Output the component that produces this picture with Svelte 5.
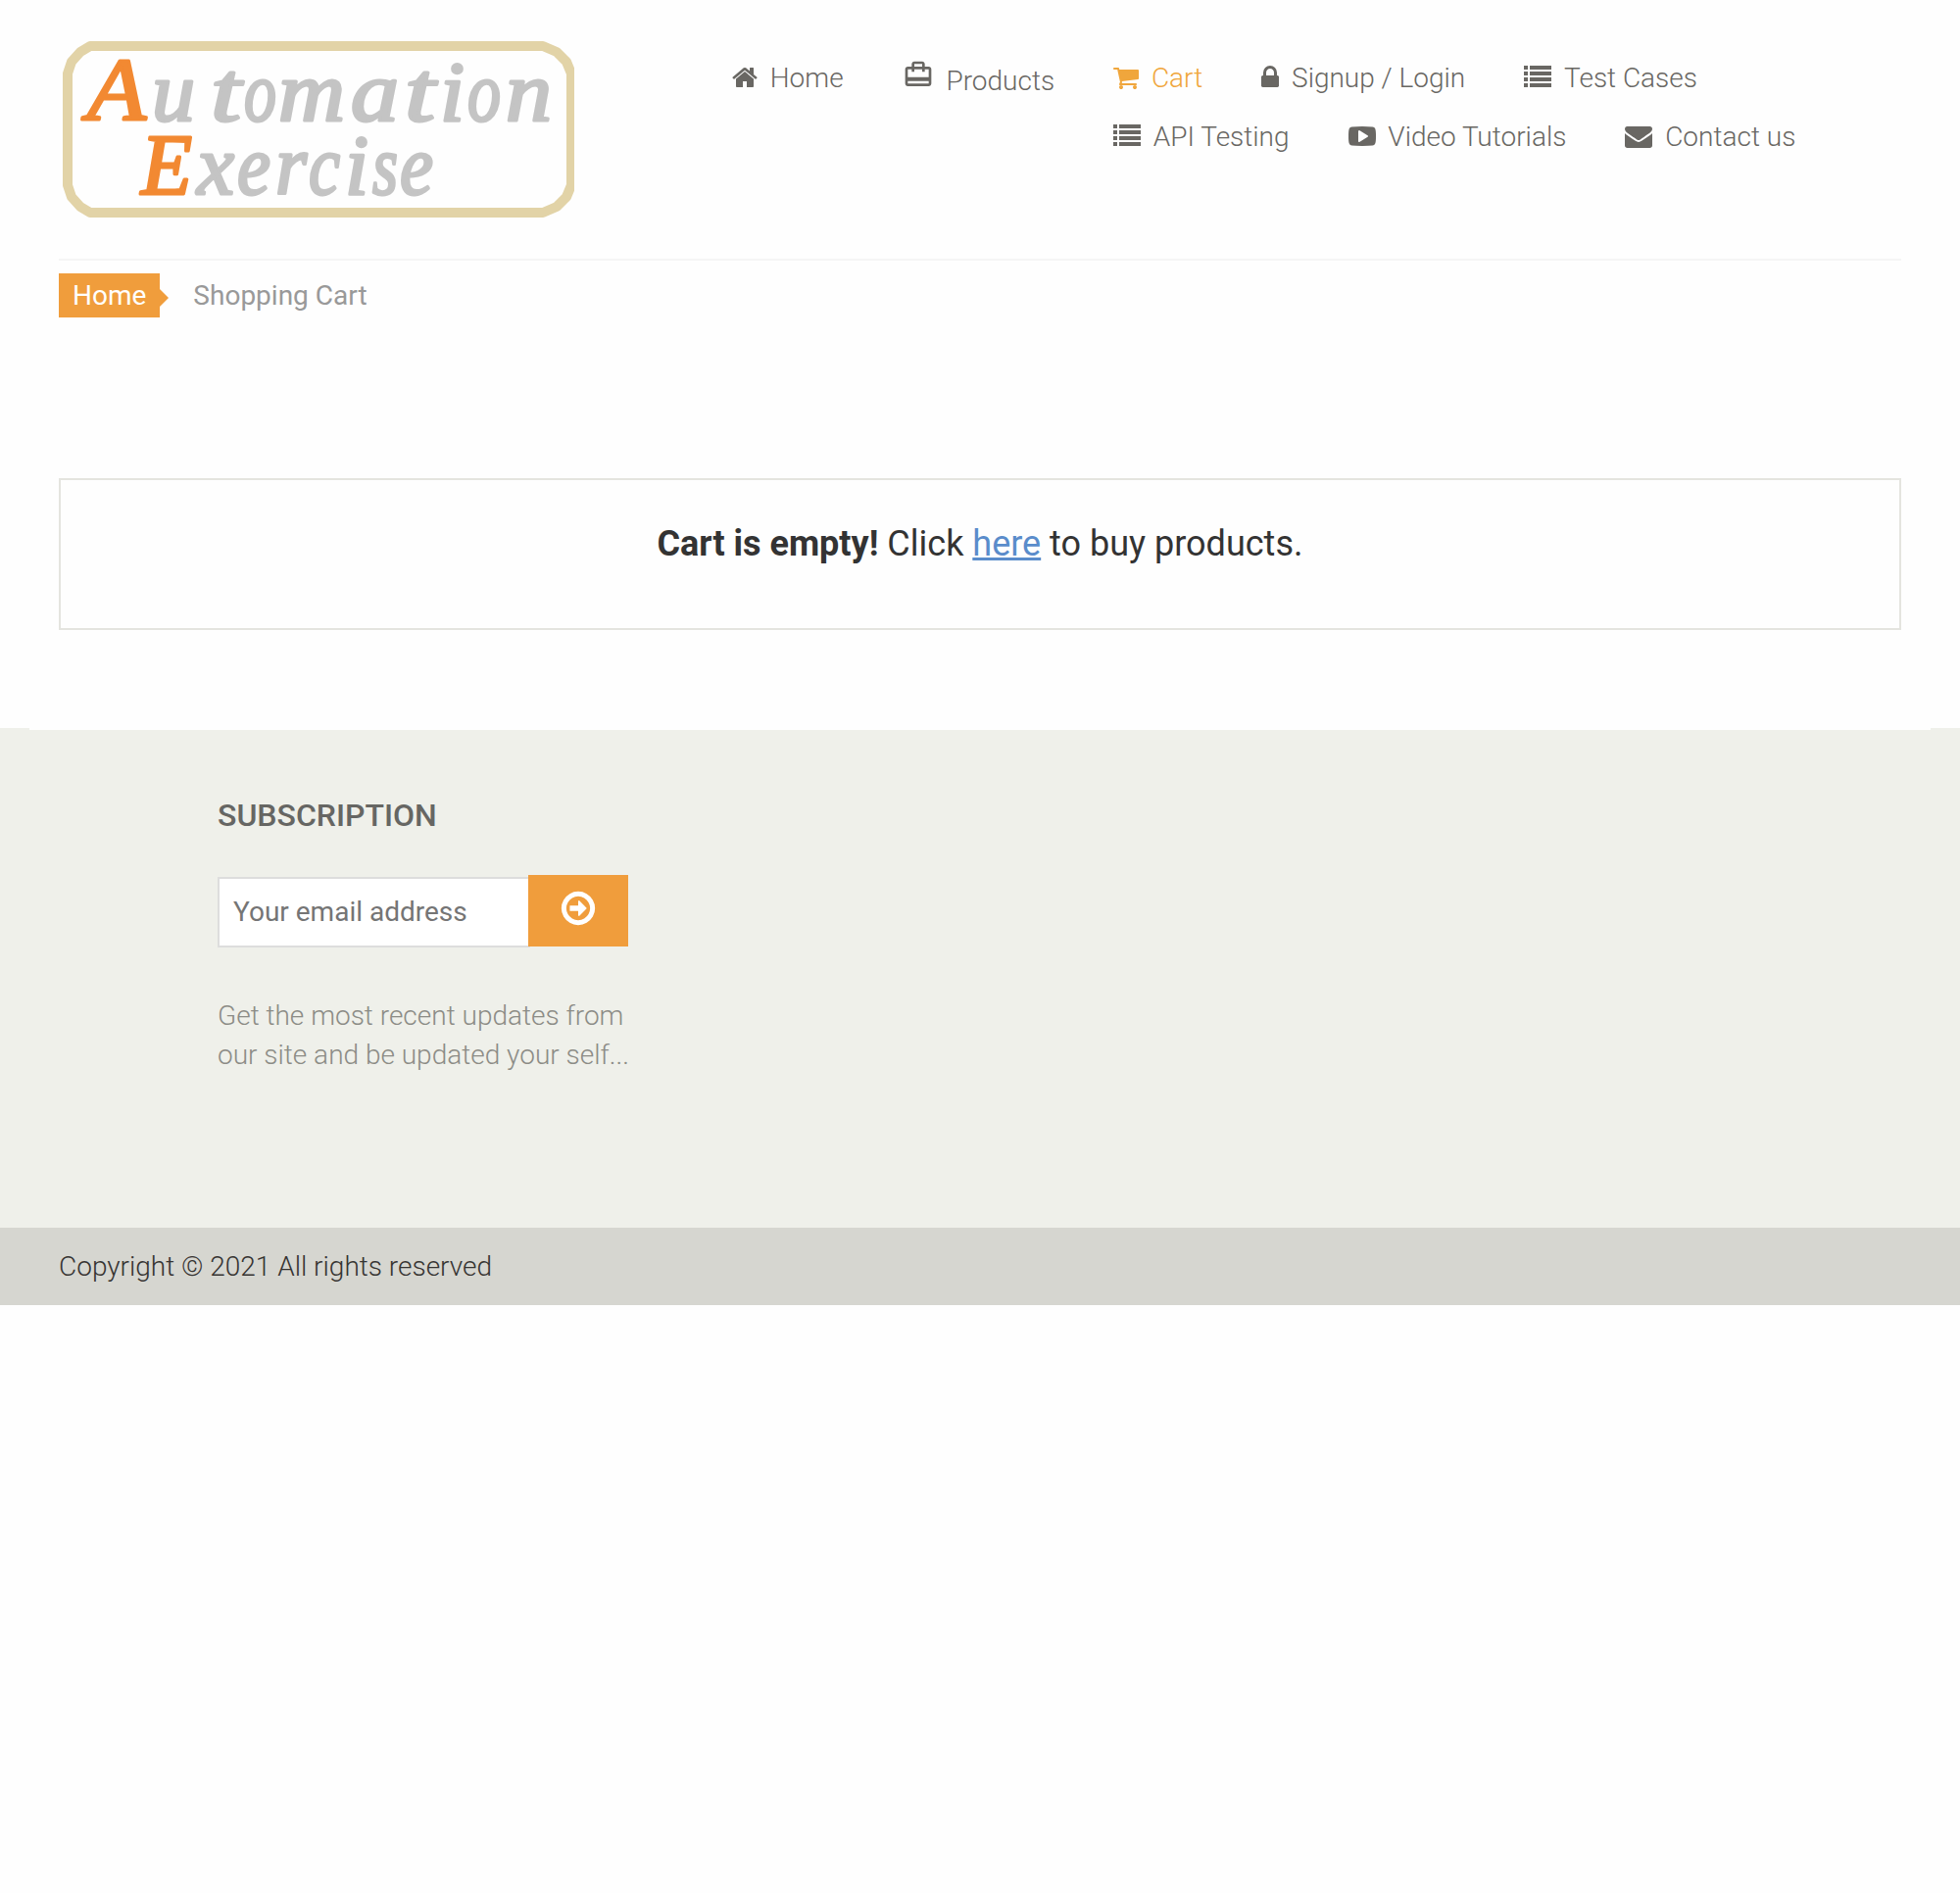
<script>
  const icons = {
    home: { box: '64 0 1664 1792', w: 26, d: 'M1472 992v480q0 26-19 45t-45 19h-384v-384h-256v384h-384q-26 0-45-19t-19-45v-480q0-1 .5-3t.5-3l575-474 575 474q1 2 1 6zm223-69l-62 74q-8 9-21 11h-3q-13 0-21-7l-692-577-692 577q-12 8-24 7-13-2-21-11l-62-74q-8-10-7-23.5t11-21.5l719-599q32-26 76-26t76 26l244 204v-195q0-14 9-23t23-9h192q14 0 23 9t9 23v408l219 182q10 8 11 21.5t-7 23.5z' },
    bag: { box: '0 0 24 24', w: 32, d: 'M20 6h-3V4c0-1.11-.89-2-2-2H9c-1.11 0-2 .89-2 2v2H4c-1.11 0-2 .89-2 2v11c0 1.11.89 2 2 2h16c1.11 0 2-.89 2-2V8c0-1.11-.89-2-2-2zM9 4h6v2H9V4zm11 15H4v-2h16v2zm0-5H4V8h3v2h2V8h6v2h2V8h3v6z' },
    cart: { box: '64 0 1664 1792', w: 26, d: 'M704 1536q0 52-38 90t-90 38-90-38-38-90 38-90 90-38 90 38 38 90zm896 0q0 52-38 90t-90 38-90-38-38-90 38-90 90-38 90 38 38 90zm128-1088v512q0 24-16.5 42.5t-40.5 21.5l-1044 122q13 60 13 70 0 16-24 64h920q26 0 45 19t19 45-19 45-45 19h-1024q-26 0-45-19t-19-45q0-11 8-31.5t16-36 21.5-40 15.5-29.5l-177-823h-204q-26 0-45-19t-19-45 19-45 45-19h256q16 0 28.5 6.5t19.5 15.5 13 24.5 8 26 5.5 29.5 4.5 26h1201q26 0 45 19t19 45z' },
    lock: { box: '320 0 1152 1792', w: 18, d: 'M640 768h512v-192q0-106-75-181t-181-75-181 75-75 181v192zm832 96v576q0 40-28 68t-68 28h-960q-40 0-68-28t-28-68v-576q0-40 28-68t68-28h32v-192q0-184 132-316t316-132 316 132 132 316v192h32q40 0 68 28t28 68z' },
    list: { box: '0 0 28 28', w: 28, d: 'M0 2h4v4H0zM6 2h22v4H6zM0 8h4v4H0zM6 8h22v4H6zM0 14h4v4H0zM6 14h22v4H6zM0 20h4v4H0zM6 20h22v4H6z' },
    video: { box: '0 0 1792 1792', w: 28, d: 'M1280 896q0-37-30-54l-512-320q-31-20-65-2-33 18-33 56v640q0 38 33 56 16 8 31 8 20 0 34-10l512-320q30-17 30-54zm512 0q0 96-1 150t-8.5 136.5-22.5 147.5q-16 73-69 123t-124 58q-222 25-671 25t-671-25q-71-8-124.5-58t-69.5-123q-14-65-21.5-147.5t-8.5-136.5-1-150 1-150 8.5-136.5 22.5-147.5q16-73 69-123t124-58q222-25 671-25t671 25q71 8 124.5 58t69.5 123q14 65 21.5 147.5t8.5 136.5 1 150z' },
    mail: { box: '0 0 1792 1792', w: 28, d: 'M1792 710v794q0 66-47 113t-113 47h-1472q-66 0-113-47t-47-113v-794q44 49 101 87 362 246 497 345 57 42 92.5 65.5t94.5 48 110 24.5h2q51 0 110-24.5t94.5-48 92.5-65.5q170-123 498-345 57-39 100-87zm0-294q0 79-49 151t-122 123q-376 261-468 325-10 7-42.5 31t-54 38.5-52 32.5-57.5 27-50 9h-2q-23 0-50-9t-57.5-27-52-32.5-54-38.5-42.5-31q-91-64-262-182.5t-205-142.5q-62-42-117-115.5t-55-136.5q0-78 41.5-130t118.5-52h1472q65 0 112.5 47t47.5 113z' }
  };
  const rows = [
    [
      { icon: 'home', label: 'Home' },
      { icon: 'bag', label: 'Products' },
      { icon: 'cart', label: 'Cart', active: true },
      { icon: 'lock', label: 'Signup / Login' },
      { icon: 'list', label: 'Test Cases' }
    ],
    [
      { icon: 'list', label: 'API Testing' },
      { icon: 'video', label: 'Video Tutorials' },
      { icon: 'mail', label: 'Contact us' }
    ]
  ];
  // Logo lettering: character, left edge, advance width
  const words = [
    { y: 123, letters: [['u', 155, 44], ['t', 215, 31], ['o', 249, 33], ['m', 284, 68], ['a', 358, 49], ['t', 413, 31], ['i', 449, 25], ['o', 477, 34], ['n', 516, 47]] },
    { y: 198, letters: [['x', 201, 38], ['e', 242, 34], ['r', 281, 32], ['c', 315, 32], ['i', 352, 24], ['s', 380, 26], ['e', 408, 34]] }
  ];
</script>

<header>
  <svg class="logo" viewBox="60 38 526 188" role="img" aria-label="Automation Exercise">
    <path class="frame" d="M92 47H554L568 53L578 63L583 75V189L578 201L568 211L554 217H92L82 211L73 201L69 189V75L73 63L82 53Z" />
    <g class="word">
      <text class="cap" x="89" y="122" font-size="92" textLength="60" lengthAdjust="spacingAndGlyphs">A</text>
      <text class="cap" x="144" y="198" font-size="88" textLength="52" lengthAdjust="spacingAndGlyphs">E</text>
      {#each words as word}
        {#each word.letters as [char, x, w]}
          <text {x} y={word.y} font-size="86" textLength={w} lengthAdjust="spacingAndGlyphs">{char}</text>
        {/each}
      {/each}
    </g>
  </svg>
  <nav>
    {#each rows as row}
      <div class="navrow">
        {#each row as item}
          <a class="item" class:active={item.active} class:low={item.icon === 'bag'}>
            <svg width={icons[item.icon].w} height={item.icon === 'bag' ? 32 : 28} viewBox={icons[item.icon].box}><path d={icons[item.icon].d} /></svg>
            <span>{item.label}</span>
          </a>
        {/each}
      </div>
    {/each}
  </nav>
</header>

<main>
  <div class="crumbs">
    <a class="crumb">Home</a>
    <span>Shopping Cart</span>
  </div>
  <div class="empty">
    <p><b>Cart is empty!</b> Click <a class="here">here</a> to buy products.</p>
  </div>
</main>

<footer>
  <div class="edge"></div>
  <section>
    <h2>SUBSCRIPTION</h2>
    <form>
      <input type="email" placeholder="Your email address" />
      <button type="button" aria-label="Subscribe">
        <svg width="40" height="40" viewBox="0 0 1792 1792"><path d="M1280 896q0 14-9 23l-320 320q-9 9-23 9-13 0-22.5-9.5t-9.5-22.5v-192h-352q-13 0-22.5-9.5t-9.5-22.5v-192q0-13 9.5-22.5t22.5-9.5h352v-192q0-14 9-23t23-9q12 0 24 10l319 319q9 9 9 23zm160 0q0-148-73-273t-198-198-273-73-273 73-198 198-73 273 73 273 198 198 273 73 273-73 198-198 73-273zm224 0q0 209-103 385.5t-279.5 279.5-385.5 103-385.5-103-279.5-279.5-103-385.5 103-385.5 279.5-279.5 385.5-103 385.5 103 279.5 279.5 103 385.5z" /></svg>
      </button>
    </form>
    <p>Get the most recent updates from<br />our site and be updated your self...</p>
  </section>
  <div class="copyright">Copyright © 2021 All rights reserved</div>
</footer>

<style>
  :global(body) {
    background: #fefefe;
    font-family: Roboto, sans-serif;
    font-size: 28px;
    line-height: 40px;
    font-weight: 300;
  }
  header {
    display: flex;
    box-sizing: border-box;
    height: 266px;
    margin: 0 60px;
    padding-top: 38px;
    border-bottom: 2px solid #f5f5f5;
  }
  .logo {
    width: 526px;
    height: 188px;
    flex: none;
  }
  .frame {
    fill: none;
    stroke: #e2d3a7;
    stroke-width: 10;
    stroke-linejoin: round;
  }
  .word {
    font-family: "Liberation Serif", serif;
    font-style: italic;
    font-weight: 400;
    fill: #c4c4c4;
    stroke: #c4c4c4;
    stroke-width: 3;
    stroke-linejoin: round;
  }
  .cap {
    fill: #f28932;
    stroke: #f28932;
  }
  nav {
    flex: 1;
    padding: 22px 0 0 161px;
  }
  .navrow {
    display: flex;
    gap: 60px;
    height: 60px;
  }
  .navrow + .navrow {
    padding-left: 389px;
  }
  .item {
    display: flex;
    align-items: flex-start;
    gap: 12.8px;
    height: 40px;
    color: #696763;
    white-space: nowrap;
  }
  .item svg {
    flex: none;
    margin-top: 5px;
    fill: currentColor;
  }
  .item.low svg {
    margin-top: 0;
  }
  .item.low span {
    padding-top: 3px;
  }
  .item.active {
    color: #f0a63c;
  }
  main {
    padding: 13px 60px 0;
  }
  .crumbs {
    display: flex;
    align-items: center;
    gap: 34px;
    height: 45px;
    font-weight: 400;
    color: #999;
  }
  .crumb {
    position: relative;
    height: 45px;
    padding: 0 14px;
    line-height: 45px;
    color: #fff;
    background: #f09d3c;
  }
  .crumb::after {
    content: "";
    position: absolute;
    left: 100%;
    top: 16px;
    border: 9px solid transparent;
    border-left-color: #f09d3c;
    border-right-width: 0;
  }
  .empty {
    box-sizing: border-box;
    height: 155px;
    margin-top: 164px;
    padding-top: 40px;
    border: 2px solid #e4e4df;
    text-align: center;
  }
  .empty p {
    margin: 0;
    font-size: 36px;
    line-height: 51px;
    font-weight: 400;
    color: #333;
  }
  .here {
    color: #5a8ccb;
    text-decoration: underline;
  }
  footer {
    margin-top: 100px;
    background: #eff0ea;
  }
  .edge {
    height: 2px;
    margin: 0 30px;
    background: #fefefe;
  }
  section {
    box-sizing: border-box;
    height: 508px;
    padding: 67px 0 0 222px;
  }
  h2 {
    margin: 0;
    font-size: 32px;
    line-height: 40px;
    font-weight: 500;
    color: #666663;
  }
  form {
    display: flex;
    align-items: flex-start;
    margin-top: 41px;
  }
  input {
    box-sizing: border-box;
    width: 319px;
    height: 72px;
    margin: 2px -2px 0 0;
    padding: 0 14px 2px;
    border: 2px solid #ddd;
    border-radius: 0;
    background: #fff;
    font: 400 28px Roboto, sans-serif;
  }
  input::placeholder {
    color: #757575;
  }
  button {
    position: relative;
    display: flex;
    justify-content: center;
    box-sizing: border-box;
    width: 102px;
    height: 73px;
    padding: 14px 0 0;
    border: 0;
    background: #f09d3c;
  }
  button svg {
    fill: #fff;
  }
  section p {
    margin: 50px 0 0;
    color: #8c8c86;
  }
  .copyright {
    box-sizing: border-box;
    height: 79px;
    padding: 20px 60px 0;
    background: #d6d6d0;
    color: #363432;
  }
</style>
